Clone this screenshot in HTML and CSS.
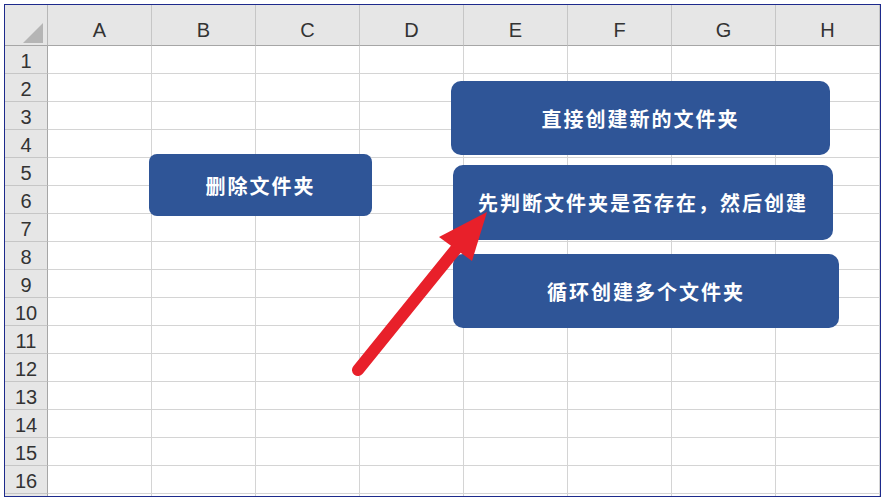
FILE: index.html
```html
<html lang="zh-CN">
<head>
    <meta charset="UTF-8">
    <meta name="viewport" content="width=device-width, initial-scale=1.0">
    <title>文件夹操作</title>
    <link rel="stylesheet" href="styles.css">
</head>
<body>
    <div class="sheet">
        <div class="grid" id="grid"></div>

        <div class="shape shape-delete">删除文件夹</div>
        <div class="shape shape-create">直接创建新的文件夹</div>
        <div class="shape shape-check">先判断文件夹是否存在，然后创建</div>
        <div class="shape shape-loop">循环创建多个文件夹</div>

        <svg class="arrow" width="875" height="492" viewBox="0 0 875 492">
            <line x1="353" y1="365" x2="455" y2="239" stroke="#e8202a" stroke-width="12" stroke-linecap="round"/>
            <polygon points="482,207 434,232 467,256" fill="#e8202a"/>
        </svg>
    </div>

    <script>
        const columns = ['A', 'B', 'C', 'D', 'E', 'F', 'G', 'H'];
        const rowCount = 16;
        const grid = document.getElementById('grid');

        function addCell(className, text) {
            const cell = document.createElement('div');
            cell.className = className;
            if (text) cell.textContent = text;
            grid.appendChild(cell);
        }

        addCell('corner');
        columns.forEach(col => addCell('col-head', col));

        for (let r = 1; r <= rowCount; r++) {
            addCell('row-head', String(r));
            columns.forEach(() => addCell('cell'));
        }

        // the next row peeks out under the last one
        addCell('row-head');
        columns.forEach(() => addCell('cell'));
    </script>
</body>
</html>
```

FILE: styles.css
```css
body {
    margin: 0;
    background: #fff;
    font-family: "Liberation Sans", "Noto Sans CJK SC", sans-serif;
}
.sheet {
    position: relative;
    margin: 4px 0 0 4px;
    width: 875px;
    height: 491px;
    border: 1px solid #1d2a8c;
    overflow: hidden;
}
.grid {
    display: grid;
    grid-template-columns: 43px repeat(8, 104px);
    grid-template-rows: 41px;
    grid-auto-rows: 28px;
}
.corner,
.col-head,
.row-head,
.cell {
    box-sizing: border-box;
    border-right: 1px solid #d4d4d4;
    border-bottom: 1px solid #d4d4d4;
}
.corner {
    position: relative;
    background: #e6e6e6;
    border-right-color: #b7b7b7;
    border-bottom-color: #a6a6a6;
}
.corner::after {
    content: '';
    position: absolute;
    right: 4px;
    bottom: 2px;
    width: 20px;
    height: 20px;
    background: #b5b5b5;
    clip-path: polygon(100% 0, 100% 100%, 0 100%);
}
.col-head {
    background: #e6e6e6;
    border-right-color: #c6c6c6;
    border-bottom-color: #a6a6a6;
    display: flex;
    align-items: flex-end;
    justify-content: center;
    padding-bottom: 3px;
    font-size: 20px;
    color: #333;
}
.row-head {
    background: #e6e6e6;
    border-right-color: #a6a6a6;
    border-bottom-color: #c6c6c6;
    display: flex;
    align-items: flex-end;
    justify-content: center;
    padding-bottom: 1px;
    font-size: 20px;
    line-height: 22px;
    color: #333;
}
.shape {
    position: absolute;
    display: flex;
    align-items: center;
    justify-content: center;
    background: #2f5597;
    border-radius: 10px;
    color: #fff;
    font-family: "Noto Sans CJK SC", sans-serif;
    font-weight: bold;
    font-size: 20px;
    letter-spacing: 2px;
}
.shape-delete {
    left: 144px;
    top: 149px;
    width: 223px;
    height: 62px;
    border-radius: 8px;
}
.shape-create {
    left: 446px;
    top: 76px;
    width: 379px;
    height: 74px;
}
.shape-check {
    left: 448px;
    top: 160px;
    width: 380px;
    height: 75px;
}
.shape-loop {
    left: 448px;
    top: 249px;
    width: 386px;
    height: 74px;
}
.arrow {
    position: absolute;
    left: 0;
    top: 0;
}
```
